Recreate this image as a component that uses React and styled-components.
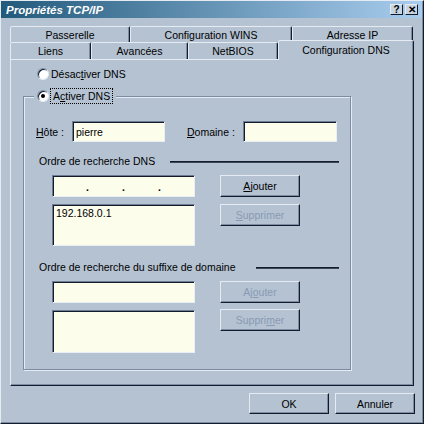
import React from 'react';
import styled, { createGlobalStyle } from 'styled-components';

const BG = '#b4c2d2';
const LIGHT = '#e4ebf2';
const SHADE = '#7c8ca4';
const DARK = '#141c2c';
const FIELD = '#fdfdec';
const DISABLED = '#8a9ab4';

const GlobalStyle = createGlobalStyle`
  html, body {
    margin: 0;
    padding: 0;
    background: ${BG};
  }
  body {
    font-family: "Liberation Sans", Arial, sans-serif;
    font-size: 10.5px;
    color: #000;
  }
`;

const Window = styled.div`
  width: 424px;
  height: 424px;
  box-sizing: border-box;
  background: ${BG};
  border: 1px solid;
  border-color: ${LIGHT} ${DARK} ${DARK} ${LIGHT};
  box-shadow: inset -1px -1px 0 ${SHADE};
  display: flex;
  flex-direction: column;
`;

const TitleBar = styled.div`
  height: 17px;
  margin-right: 1px;
  padding: 0 4px 0 5px;
  display: flex;
  align-items: center;
  justify-content: space-between;
  background: linear-gradient(to right, #225a7c, #a9cdee);
`;

const Title = styled.span`
  color: #fff;
  font-weight: bold;
  font-style: italic;
  font-size: 11.5px;
`;

const TitleButtons = styled.div`
  display: flex;
  gap: 2px;
`;

const TitleButton = styled.div`
  width: 13px;
  height: 11px;
  box-sizing: border-box;
  background: #c8d4e0;
  border: 1px solid;
  border-color: ${LIGHT} ${DARK} ${DARK} ${LIGHT};
  display: flex;
  align-items: center;
  justify-content: center;
  font-weight: bold;
  font-size: 10px;
  line-height: 1;
`;

const Body = styled.div`
  flex: 1;
  padding: 8px 9px 0 9px;
  display: flex;
  flex-direction: column;
`;

const TabRow = styled.div`
  display: flex;
  align-items: flex-end;
  height: ${p => p.h}px;
`;

const Tab = styled.div`
  width: ${p => p.w}px;
  height: ${p => (p.active ? 20 : p.h)}px;
  margin-bottom: ${p => (p.active ? -1 : 0)}px;
  position: relative;
  z-index: ${p => (p.active ? 2 : 0)};
  box-sizing: border-box;
  background: ${BG};
  border: 1px solid;
  border-bottom: none;
  border-color: ${LIGHT} ${DARK} transparent ${LIGHT};
  border-radius: 2px 2px 0 0;
  box-shadow: inset -1px 0 0 ${SHADE};
  display: flex;
  align-items: ${p => (p.active ? 'flex-start' : 'center')};
  padding-top: ${p => (p.active ? 3 : 0)}px;
  justify-content: center;
  white-space: nowrap;
`;

const Panel = styled.div`
  height: 327px;
  box-sizing: border-box;
  border: 1px solid;
  border-color: ${LIGHT} ${DARK} ${DARK} ${LIGHT};
  box-shadow: inset -1px -1px 0 ${SHADE};
  padding-left: 12px;
  display: flex;
  flex-direction: column;
  position: relative;
  z-index: 1;
`;

const RadioRow = styled.label`
  display: flex;
  align-items: center;
  height: 14px;
  margin: 7px 0 0 14px;
  gap: 2px;
`;

const Radio = styled.span`
  width: 12px;
  height: 12px;
  box-sizing: border-box;
  border-radius: 50%;
  background: #fff;
  border: 1px solid;
  border-color: ${SHADE} ${LIGHT} ${LIGHT} ${SHADE};
  box-shadow: inset 1px 1px 0 ${DARK};
  display: flex;
  align-items: center;
  justify-content: center;
  flex: none;

  &::after {
    content: '';
    display: ${p => (p.checked ? 'block' : 'none')};
    width: 4px;
    height: 4px;
    border-radius: 50%;
    background: #000;
  }
`;

const GroupBox = styled.div`
  width: 328px;
  height: 274px;
  margin-top: 15px;
  box-sizing: border-box;
  border: 1px solid ${SHADE};
  box-shadow: inset 1px 1px 0 ${LIGHT}, 1px 1px 0 ${LIGHT};
  display: flex;
  flex-direction: column;
`;

const Legend = styled.div`
  align-self: flex-start;
  height: 16px;
  margin: -9px 0 0 10px;
  padding: 0 3px;
  background: ${BG};
  display: flex;
  align-items: center;
`;

const Focus = styled.span`
  border: 1px dotted #000;
  padding: 1px 2px;
  margin-left: 1px;
  line-height: 12px;
`;

const HostRow = styled.div`
  display: flex;
  align-items: center;
  margin: 17px 0 0 12px;
`;

const FieldLabel = styled.span`
  width: ${p => p.w}px;
  margin-left: ${p => p.ml || 0}px;
  flex: none;
`;

const Field = styled.div`
  width: ${p => p.w}px;
  height: ${p => p.h}px;
  box-sizing: border-box;
  background: ${FIELD};
  border: 1px solid;
  border-color: #6c7c94 #e8eef4 #e8eef4 #6c7c94;
  box-shadow: inset 1px 1px 0 ${DARK};
  padding: 2px 3px;
  display: flex;
  align-items: ${p => (p.list ? 'flex-start' : 'center')};
  flex: none;
`;

const IpField = styled(Field)`
  justify-content: space-evenly;
  align-items: flex-end;
  padding: 0 0 5px;
  font-weight: bold;
  line-height: 8px;
`;

const SectionHeader = styled.div`
  display: flex;
  align-items: center;
  height: 14px;
  margin: ${p => p.mt}px 11px 0 15px;
`;

const Rule = styled.div`
  flex: 1;
  margin-left: ${p => p.gap}px;
  height: 1px;
  background: ${DARK};
  box-shadow: 0 1px 0 #3a465c;
`;

const Block = styled.div`
  display: flex;
  gap: 25px;
  margin: 7px 0 0 28px;
`;

const Column = styled.div`
  display: flex;
  flex-direction: column;
  gap: ${p => p.gap}px;
`;

const Button = styled.div`
  width: 80px;
  height: ${p => p.h || 22}px;
  box-sizing: border-box;
  border: 1px solid;
  border-color: ${LIGHT} ${DARK} ${DARK} ${LIGHT};
  box-shadow: inset -1px -1px 0 ${SHADE};
  display: flex;
  align-items: center;
  justify-content: center;
  color: ${p => (p.disabled ? DISABLED : '#000')};
`;

const Footer = styled.div`
  display: flex;
  justify-content: flex-end;
  gap: 6px;
  margin: 7px -1px 0 0;
`;

export default function App() {
  return (
    <>
      <GlobalStyle />
      <Window>
        <TitleBar>
          <Title>Propriétés TCP/IP</Title>
          <TitleButtons>
            <TitleButton>?</TitleButton>
            <TitleButton>✕</TitleButton>
          </TitleButtons>
        </TitleBar>
        <Body>
          <TabRow h={16}>
            <Tab w={120} h={16}>Passerelle</Tab>
            <Tab w={162} h={16}>Configuration WINS</Tab>
            <Tab w={121} h={16}>Adresse IP</Tab>
          </TabRow>
          <TabRow h={17}>
            <Tab w={81} h={17}>Liens</Tab>
            <Tab w={97} h={17}>Avancées</Tab>
            <Tab w={90} h={17}>NetBIOS</Tab>
            <Tab w={136} active>Configuration DNS</Tab>
          </TabRow>
          <Panel>
            <RadioRow>
              <Radio />
              <span>Désac<u>t</u>iver DNS</span>
            </RadioRow>
            <GroupBox>
              <Legend>
                <Radio checked />
                <Focus>A<u>c</u>tiver DNS</Focus>
              </Legend>
              <HostRow>
                <FieldLabel w={36}><u>H</u>ôte :</FieldLabel>
                <Field w={93} h={21}>pierre</Field>
                <FieldLabel w={56} ml={22}><u>D</u>omaine :</FieldLabel>
                <Field w={94} h={21} />
              </HostRow>
              <SectionHeader mt={12}>
                <span>Ordre de recherche DNS</span>
                <Rule gap={15} />
              </SectionHeader>
              <Block>
                <Column gap={7}>
                  <IpField w={143} h={22}>
                    <span>.</span>
                    <span>.</span>
                    <span>.</span>
                  </IpField>
                  <Field w={143} h={42} list>192.168.0.1</Field>
                </Column>
                <Column gap={7}>
                  <Button><span><u>A</u>jouter</span></Button>
                  <Button disabled><span><u>S</u>upprimer</span></Button>
                </Column>
              </Block>
              <SectionHeader mt={14}>
                <span>Ordre de recherche du suffixe de domaine</span>
                <Rule gap={20} />
              </SectionHeader>
              <Block>
                <Column gap={7}>
                  <Field w={143} h={22} />
                  <Field w={143} h={43} list />
                </Column>
                <Column gap={6}>
                  <Button disabled><span>Aj<u>o</u>uter</span></Button>
                  <Button disabled><span>Suppri<u>m</u>er</span></Button>
                </Column>
              </Block>
            </GroupBox>
          </Panel>
          <Footer>
            <Button h={21}>OK</Button>
            <Button h={21}>Annuler</Button>
          </Footer>
        </Body>
      </Window>
    </>
  );
}
